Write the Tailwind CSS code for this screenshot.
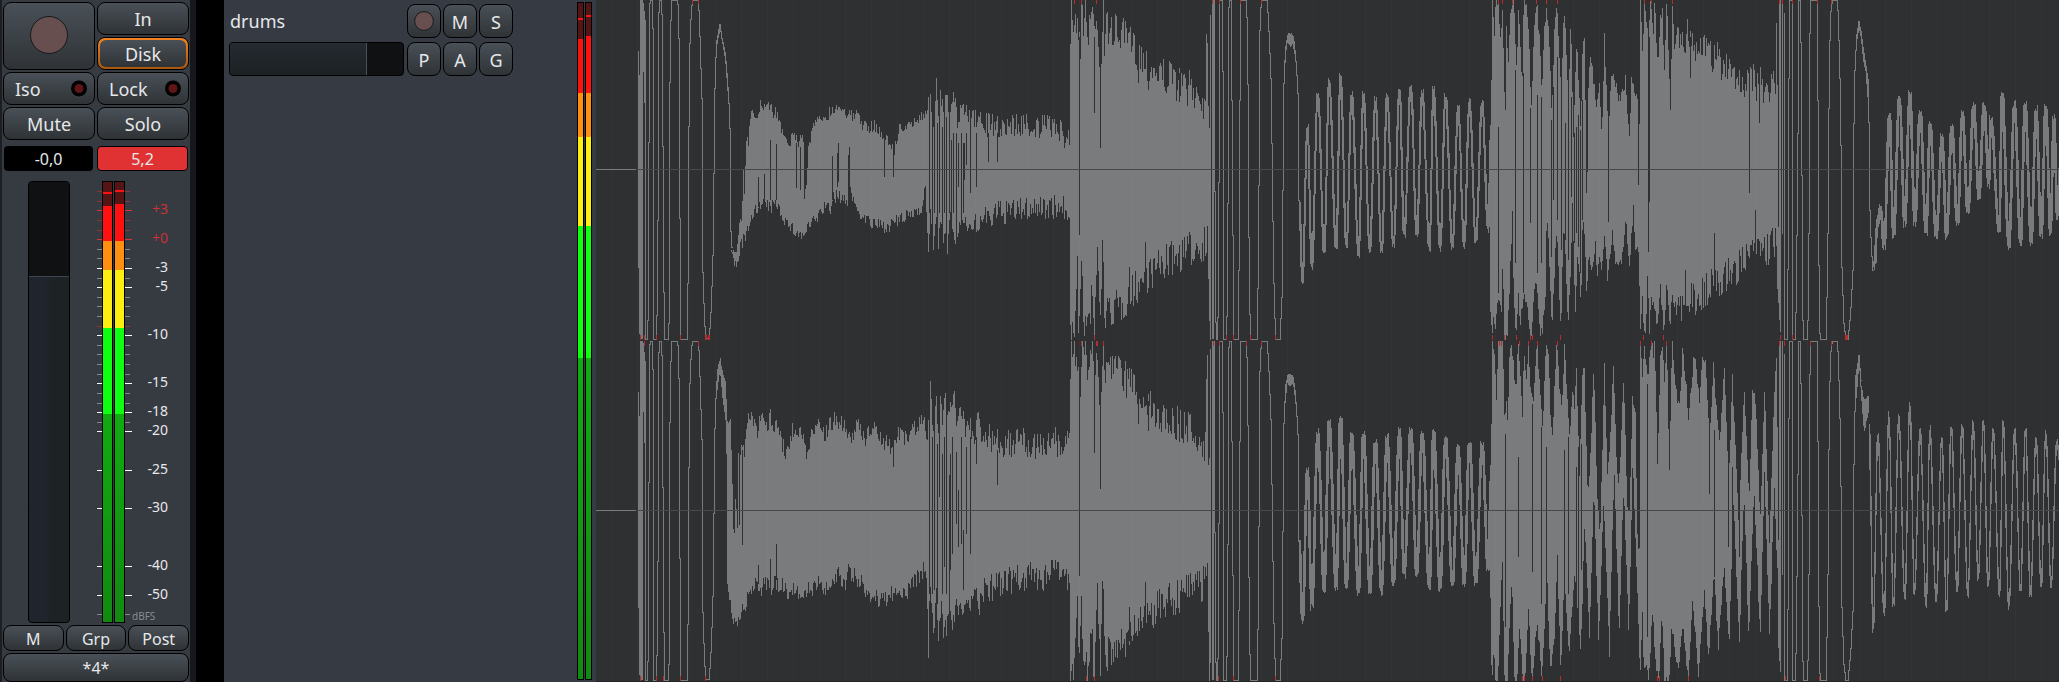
<!DOCTYPE html>
<html lang="en">
<head>
<meta charset="utf-8">
<title>drums</title>
<meta name="viewport" content="width=device-width, initial-scale=1">
<script src="https://cdn.jsdelivr.net/npm/@tailwindcss/browser@4"></script>
</head>
<body class="flex h-screen overflow-hidden bg-black font-['Noto_Sans','Open_Sans',sans-serif] text-lg text-[#e6e8ea]">

<!-- Mixer strip -->
<aside class="flex w-[196px] shrink-0 flex-col border-l-2 border-[#1c1e21] border-r-[6px] border-r-[#16181b] bg-[#363a41] pt-0.5 pr-px pl-px" aria-label="Mixer strip">
  <div class="grid grid-cols-2 gap-0.5">
    <button aria-label="Record" class="row-span-2 flex items-center justify-center rounded-lg border border-black bg-linear-to-b from-[#495057] to-[#2f3336]">
      <svg class="size-10" viewBox="0 0 40 40"><circle cx="20" cy="19" r="18.5" fill="#684f4f" stroke="#17191b"/></svg>
    </button>
    <button class="h-[33px] rounded-lg border border-black bg-linear-to-b from-[#495057] to-[#2f3336] leading-none">In</button>
    <button class="h-[33px] rounded-lg border border-black bg-linear-to-b from-[#f58220] to-[#a8560f] p-0.5 leading-none"><span class="flex h-full items-center justify-center rounded-md bg-linear-to-b from-[#495057] to-[#2f3336]">Disk</span></button>
    <button class="flex h-[33px] items-center justify-between rounded-lg border border-black bg-linear-to-b from-[#495057] to-[#2f3336] pr-[5px] pl-[11px] leading-none">Iso
      <svg class="size-5" viewBox="0 0 20 20"><circle cx="10" cy="10" r="9" fill="#3c4145"/><circle cx="10" cy="9.500" r="8" fill="#000"/><circle cx="10" cy="9.500" r="4.500" fill="#601516"/></svg></button>
    <button class="flex h-[33px] items-center justify-between rounded-lg border border-black bg-linear-to-b from-[#495057] to-[#2f3336] pr-[5px] pl-[11px] leading-none">Lock
      <svg class="size-5" viewBox="0 0 20 20"><circle cx="10" cy="10" r="9" fill="#3c4145"/><circle cx="10" cy="9.500" r="8" fill="#000"/><circle cx="10" cy="9.500" r="4.500" fill="#601516"/></svg></button>
    <button class="h-[33px] rounded-lg border border-black bg-linear-to-b from-[#495057] to-[#2f3336] leading-none">Mute</button>
    <button class="h-[33px] rounded-lg border border-black bg-linear-to-b from-[#495057] to-[#2f3336] leading-none">Solo</button>
  </div>
  <div class="mt-1.5 flex gap-1 px-px text-base">
    <button class="h-[25px] flex-1 rounded-sm bg-black pt-px leading-none">-0,0</button>
    <button class="h-[25px] flex-1 rounded-sm border border-black bg-[#e03232] pt-px leading-none">5,2</button>
  </div>
  <div class="mt-2.5 flex min-h-0 flex-1 pl-[25px]">
    <div class="relative w-[42px] overflow-hidden rounded-sm border border-black bg-linear-to-r from-[#20242c] from-40% to-[#1d2224] to-60%">
      <div class="h-[95px] border-b border-[#3d4650] bg-[#101113]"></div>
      <input type="range" aria-label="Fader" min="0" max="100" value="78" class="absolute inset-0 h-full w-full opacity-0 [writing-mode:vertical-lr]">
    </div>
    <svg class="ml-[26px] h-full w-[76px]" viewBox="96 181 76 442" role="img" aria-label="Level meter">
      <defs>
        <linearGradient id="deep" x1="0" y1="0" x2="0" y2="1"><stop offset="0" stop-color="#10ac10"/><stop offset="1" stop-color="#128912"/></linearGradient>
      </defs>
      <g shape-rendering="crispEdges">
        <path fill="#000" d="M102 181h11v442h-11zM114 181h11v442h-11z"/>
        <path fill="#551516" d="M103 182h9v30h-9zM115 182h9v30h-9z"/>
        <path fill="#ff1011" d="M103 206h9v35h-9zM115 204h9v37h-9zM103 192h9v2h-9zM115 190h9v2h-9z"/>
        <path fill="#ff8f11" d="M103 241h9v29h-9zM115 241h9v29h-9z"/>
        <path fill="#fdee11" d="M103 270h9v58h-9zM115 270h9v58h-9z"/>
        <path fill="#0fff10" d="M103 328h9v86h-9zM115 328h9v86h-9z"/>
        <path fill="url(#deep)" d="M103 414h9v208h-9zM115 414h9v208h-9z"/>
        <g id="ticks"></g>
      </g>
      <g id="marks" font-size="14" text-anchor="end" fill="#e6e8ea"></g>
      <text x="132" y="620" font-size="10" fill="#878c93">dBFS</text>
    </svg>
  </div>
  <div class="mt-0.5 flex gap-0.5 text-base">
    <button class="h-[26px] flex-1 rounded-lg border border-black bg-linear-to-b from-[#495057] to-[#2f3336] pt-px leading-none">M</button>
    <button class="h-[26px] flex-1 rounded-lg border border-black bg-linear-to-b from-[#495057] to-[#2f3336] pt-px leading-none">Grp</button>
    <button class="h-[26px] flex-1 rounded-lg border border-black bg-linear-to-b from-[#495057] to-[#2f3336] pt-px leading-none">Post</button>
  </div>
  <button class="mt-0.5 h-[29px] shrink-0 rounded-lg border border-black bg-linear-to-b from-[#495057] to-[#2f3336] text-base leading-none">*4*</button>
</aside>

<!-- Track header -->
<section class="ml-7 flex w-[372px] shrink-0 justify-between bg-[#363a42] pr-1 pl-[5px]" aria-label="Track drums">
  <div class="flex gap-[3px] pt-1">
    <div class="flex flex-col gap-1">
      <h1 class="h-[34px] pl-px leading-[34px] font-normal">drums</h1>
      <div class="relative h-[34px] w-[175px] overflow-hidden rounded-sm border border-black bg-[#101113]">
        <div class="h-full w-[79%] border-r border-[#4a525a] bg-linear-to-b from-[#252a33] to-[#1c2123]"></div>
        <input type="range" aria-label="Track gain" min="0" max="100" value="79" class="absolute inset-0 h-full w-full opacity-0">
      </div>
    </div>
    <div class="grid grid-cols-3 content-start gap-x-0.5 gap-y-1">
      <button aria-label="Record enable" class="flex size-[34px] items-center justify-center rounded-lg border border-black bg-linear-to-b from-[#495057] to-[#2f3336]"><svg class="size-5" viewBox="0 0 20 20"><circle cx="10" cy="10" r="9.400" fill="#684f4f" stroke="#17191b"/></svg></button>
      <button class="size-[34px] rounded-lg border border-black bg-linear-to-b from-[#495057] to-[#2f3336] pt-0.5 leading-none">M</button>
      <button class="size-[34px] rounded-lg border border-black bg-linear-to-b from-[#495057] to-[#2f3336] pt-0.5 leading-none">S</button>
      <button class="size-[34px] rounded-lg border border-black bg-linear-to-b from-[#495057] to-[#2f3336] pt-0.5 leading-none">P</button>
      <button class="size-[34px] rounded-lg border border-black bg-linear-to-b from-[#495057] to-[#2f3336] pt-0.5 leading-none">A</button>
      <button class="size-[34px] rounded-lg border border-black bg-linear-to-b from-[#495057] to-[#2f3336] pt-0.5 leading-none">G</button>
    </div>
  </div>
  <svg class="h-full w-[15px]" viewBox="577 0 15 682" preserveAspectRatio="none" shape-rendering="crispEdges" role="img" aria-label="Track meter">
    <path fill="#000" d="M577 2h7v678h-7zM585 2h7v678h-7z"/>
    <path fill="#551516" d="M578 3h5v36h-5zM586 3h5v36h-5z"/>
    <path fill="#ff1011" d="M578 39h5v54h-5zM586 36h5v57h-5zM578 18h5v2h-5zM586 15h5v2h-5z"/>
    <path fill="#ff8f11" d="M578 93h5v44h-5zM586 93h5v44h-5z"/>
    <path fill="#fdee11" d="M578 137h5v89h-5zM586 137h5v89h-5z"/>
    <path fill="#0fff10" d="M578 226h5v132h-5zM586 226h5v132h-5z"/>
    <path fill="url(#deep)" d="M578 358h5v321h-5zM586 358h5v321h-5z"/>
  </svg>
</section>

<!-- Audio region -->
<main class="min-w-0 flex-1 bg-[#2f3032]">
  <svg class="block h-full w-full" viewBox="596 0 1463 682" preserveAspectRatio="none" shape-rendering="crispEdges" fill="none" role="img" aria-label="Waveform of drums">
    <path id="wave" stroke="#7a7b7d"/>
    <path id="gaps" stroke="#2f3032"/>
    <path id="grid" stroke="#ffffff" stroke-opacity=".02"/>
    <path stroke="#47484a" d="M637 169.500H2059M637 510.500H2059"/>
    <path stroke="#7a7b7d" d="M596 169.500H636M596 510.500H636"/>
    <path id="clips" stroke="#b92c2e"/>
    <path stroke="#242527" d="M596 681.500H2059"/>
  </svg>
</main>

<script>
// Meter scale
const tick = (ys, color, w) => ys.map(y => `<path fill="${color}" d="M97 ${y}h5v1h-5zM125 ${y}h${w}v1h-${w}z"/>`).join('');
document.getElementById('ticks').innerHTML =
  tick([191, 201, 220, 230, 326], '#8b3538', 5) + tick([210, 239], '#e03232', 7) +
  tick([249, 258, 278, 297, 306, 316, 345, 354, 364, 374, 393, 403, 422, 614], '#85888c', 5) +
  tick([268, 287, 335, 383, 412, 431, 470, 508, 566, 595], '#ffffff', 7);
document.getElementById('marks').innerHTML =
  [['+3', 209], ['+0', 238], ['-3', 267], ['-5', 286], ['-10', 334], ['-15', 382], ['-18', 411], ['-20', 430], ['-25', 469], ['-30', 507], ['-40', 565], ['-50', 594]]
  .map(([t, y]) => `<text x="168" y="${y + 5}"${t[0] === '+' ? ' fill="#c93236"' : ''}>${t}</text>`).join('');

// Waveform. Sample positions are in thirds of a pixel, relative to each block's origin.
let wave = '', gaps = '', seed = 7;
const rnd = () => (seed = (seed * 16807) % 2147483647) / 2147483647 - 0.5;
let lane = { y: 0, lo: 0, hi: 340 };
const span = (x, a, b) => {
  a = Math.max(lane.lo, Math.round(a)); b = Math.min(lane.hi, Math.round(b));
  if (b <= a) b = a + 1;
  wave += `M${x}.5 ${a}V${b}`;
};
const at = (p, x) => {
  if (x <= p[0]) return p[1];
  for (let i = 2; i < p.length; i += 2)
    if (x <= p[i]) return p[i - 1] + (p[i + 1] - p[i - 1]) * (x - p[i - 2]) / (p[i] - p[i - 2]);
  return p[p.length - 1];
};
function fill(x0, top, bot, jitter, dark = []) {
  const s = top[0], e = top[top.length - 2];
  for (let x = Math.round(s / 3); x * 3 < e; x++) {
    const a = at(top, x * 3 + 1) + rnd() * jitter, b = at(bot, x * 3 + 1) + rnd() * jitter;
    span(x0 + x, lane.y + a / 3, lane.y + Math.max(b, a + 6) / 3);
  }
  for (const [x, a, b] of dark) gaps += `M${x0 + Math.floor(x / 3)}.5 ${Math.round(lane.y + a / 3)}V${Math.round(lane.y + b / 3)}`;
}
function line(x0, p) {
  for (let i = 2; i < p.length; i += 2) {
    const xa = p[i - 2] / 3, ya = p[i - 1] / 3, xb = p[i] / 3, yb = p[i + 1] / 3;
    for (let c = Math.floor(xa); c <= Math.floor(xb); c++) {
      const f = x => xb === xa ? null : ya + (yb - ya) * (Math.min(Math.max(x, xa), xb) - xa) / (xb - xa);
      const u = f(c) ?? ya, v = f(c + 1) ?? yb;
      span(x0 + c, lane.y + Math.min(u, v), lane.y + Math.max(u, v) + 1);
    }
  }
}
function swing(x0, p, w) {
  const f = x => {
    for (let i = 2; i < p.length; i += 2)
      if (x <= p[i]) {
        const t = Math.max(0, (x - p[i - 2]) / (p[i] - p[i - 2]));
        return p[i - 1] + (p[i + 1] - p[i - 1]) * (1 - Math.cos(Math.PI * t)) / 2;
      }
    return p[p.length - 1];
  };
  for (let x = Math.round(p[0] / 3); x * 3 < p[p.length - 2]; x++) {
    const v = [-w, -w / 2, 0, w / 2, w].map(d => f(x * 3 + 1 + d));
    span(x0 + x, lane.y + (Math.min(...v) - 4 + rnd() * 18) / 3, lane.y + (Math.max(...v) + 4 + rnd() * 18) / 3);
  }
}

const kickA = [256,115,258,1018,261,1018,264,960,267,425,270,10,272,0,277,0,279,85,281,1018,289,1018,293,870,297,35,299,0,304,0,307,65,310,625,313,1000,315,1018,324,1018,327,970,330,245,334,0,352,0,355,20,358,160,361,900,362,1018,382,1018,385,765,388,185,392,70,397,0,414,0,418,40,422,175,427,325,429,815,433,940,437,1015,448,1015,454,920,460,735,464,300,467,190,471,120];
const kickB = [763,0,766,860,769,1018,773,1018,776,820,779,0,787,0,790,320,791,1018,798,1018,803,900,806,30,809,0,814,0,818,600,822,1018,836,1018,838,600,842,0,859,0,863,100,867,710,871,1018,892,1018,896,710,900,90,904,0,922,0,928,110,934,260,938,600,943,910,948,1018,960,1018,967,870,971,270,975,180];
const kickC = [253,40,254,1018,262,1018,265,700,268,0,277,0,278,1018,285,1018,289,910,294,400,297,0,302,0,305,380,309,960,312,1018,322,1018,326,900,330,100,332,0,352,0,354,300,358,960,361,1018,379,1018,384,700,388,200,392,40,397,0,413,0,418,150,422,315,426,800,432,970,438,1018,444,1018,452,940,459,810,462,370,465,210,470,110];
const snareTop = [330,130,334,0,341,90,344,0,347,125,350,15,358,110,362,150,365,0,370,60,376,0,382,120,390,40,398,30,404,110,410,0,418,200,424,170,430,0,434,180,440,70,452,90,480,100,510,130,540,165,570,200,600,220,630,235,660,255,690,265,720,285,736,320,738,80,742,80,744,350,749,350,750,0,753,0];
const snareBot = [330,1000,338,1018,345,960,352,760,356,1018,365,780,370,960,385,990,395,880,403,1010,412,740,422,980,428,720,434,950,450,930,480,920,505,890,530,860,560,825,590,805,620,785,650,770,680,755,710,740,738,725,740,740,743,600,746,1000,752,1018];
const snareGaps = [[358,110,705],[421,200,445],[404,110,338],[412,740,900],[428,720,900],[509,800,900],[556,725,850],[565,180,270],[535,150,250],[658,220,305]];
const tailB = [1017,600,1027,840,1042,385,1055,800,1073,275,1092,755,1107,245,1128,745,1141,230,1159,740,1175,280,1195,760,1210,280,1229,750,1246,300,1264,755,1281,290,1300,735,1318,268,1332,705,1352,262,1370,705,1386,278,1408,745,1420,270,1440,745,1456,290,1477,740,1494,320,1512,735,1528,305,1547,725,1566,310,1584,690,1592,420];

function hits() {
  line(560, [234,153,235,800]);
  line(560, [237,225,238,1000]);
  fill(560, [240,0,249,0], [240,1018,249,1018], 0);
  fill(560, [249,0,256,60], [249,185,256,400], 0);
  line(560, kickA);
  fill(960, snareTop, snareBot, 110, snareGaps);
  fill(960, [756,0,762,0], [756,1018,762,1018], 0);
  line(960, kickB);
  fill(960, [975,140,981,104,990,98,999,104,1005,140,1010,190], [975,200,981,130,990,138,999,135,1005,180,1010,230], 8);
  line(960, [1007,170,1012,240,1015,300,1017,600]);
  line(1700, [229,70,232,400,235,820,238,950]);
  fill(1700, [237,0,243,0], [237,950,243,1018], 0);
  line(1700, [247,0,248,700]);
  line(1700, kickC);
}

// Left channel
hits();
line(560, [471,120,480,72,487,120,496,160,501,230,507,310,511,410,511,660,516,740]);
fill(560, [471,120,480,76,486,105,496,155,503,230,508,310], [471,140,480,90,486,125,496,185,503,275,508,340], 6);
fill(560,
  [513,735,522,745,528,745,531,730,540,640,546,660,550,490,553,600,558,400,565,440,570,360,580,340,590,350,603,310,610,330,625,325,631,305,640,335,655,350,662,380,675,400,690,430,703,395,715,440,722,400,730,420,733,580,738,570,745,450,755,390,770,370,790,350,810,335,838,315,860,335,880,355,895,340,910,380,930,390,942,370,960,400,980,420,1000,450,1010,430,1022,370,1040,390,1070,360,1100,330,1108,300],
  [513,750,525,800,530,800,540,740,555,710,570,680,585,620,600,620,615,610,630,625,650,610,665,640,680,670,700,690,728,710,745,680,770,655,800,610,808,640,820,590,840,590,860,610,870,560,885,620,910,650,940,675,980,680,1020,660,1050,645,1085,620,1096,560,1100,650,1105,765,1108,700], 40,
  [[631,420,600],[650,433,600],[595,530,620],[613,523,600],[710,430,565],[722,440,570],[818,468,600],[832,460,560],[836,428,545],[865,465,600],[868,440,580],[973,420,530],[1000,450,530]]);
fill(560,
  [1108,300,1111,255,1117,360,1125,350,1128,235,1134,370,1141,275,1149,340,1156,290,1170,325,1183,300,1192,370,1200,330,1225,340,1238,390,1250,350,1260,360],
  [1108,700,1112,640,1120,725,1128,640,1135,758,1143,640,1150,720,1162,735,1170,640,1178,715,1200,690,1215,640,1233,695,1245,650,1260,690], 60,
  [[1108,250,640],[1117,360,800],[1124,200,640],[1131,370,800],[1138,200,640],[1146,380,800],[1153,200,640],[1160,350,800],[1168,200,640],[1175,420,800],[1181,400,640],[1190,400,680],[1196,430,560],[1205,420,690],[1214,430,540],[1230,350,580],[1248,400,560]]);
fill(960,
  [0,370,30,365,60,370,106,380,150,375,205,375,240,385,283,375,300,395,310,410,330,400],
  [0,670,30,665,58,660,85,655,112,640,157,635,200,625,250,620,305,620,330,640], 76,
  [[10,430,640],[31,400,580],[20,400,495],[112,400,485],[85,400,485],[49,400,480],[4,400,478]]);
swing(960, tailB, 3);
fill(1360,
  [390,420,393,330,397,0,404,115,407,0,414,0,422,115,428,0,432,265,436,335,440,0,443,225,450,60,455,0,461,0,470,230,475,20,486,270,491,0,497,0,505,80,514,325,523,60,530,0,540,150,545,290,553,80,560,20,570,165,575,360,583,90,591,0,598,170,604,300,610,55,615,60,625,310,632,60,640,400,650,110,662,390,668,130,673,125,680,570,685,250,691,160,710,320,718,235,725,420,733,115,745,400,752,250,760,215,780,310,797,235,807,425,815,220,820,265,835,310,838,370,841,0,848,185,852,0,865,110,872,0,880,90,884,0,893,210,900,60,908,20,912,240,920,0,932,370,936,0,944,160,950,80],
  [390,900,393,975,398,1018,401,910,405,1018,412,900,417,880,425,940,428,740,432,1018,442,1018,452,770,457,640,461,900,468,1018,475,880,480,980,490,890,500,900,512,1018,527,820,540,1000,547,1000,556,880,560,640,566,740,575,990,590,670,602,1000,610,690,615,720,624,990,632,800,637,600,645,950,653,740,663,920,668,620,673,700,680,890,686,750,697,815,706,710,710,840,718,770,725,810,733,710,743,845,757,700,765,785,785,780,797,650,808,800,820,620,825,740,835,760,842,1018,846,850,851,1018,858,970,863,780,867,1018,872,890,885,940,890,990,901,850,911,1010,920,850,930,980,936,880,950,940], 34,
  [[415,380,880],[467,210,790],[490,220,880],[511,325,670],[532,285,820],[544,290,790],[575,360,770],[580,260,600],[592,170,660],[605,300,750],[616,370,720],[625,310,780],[634,290,590],[643,400,730],[649,380,700],[655,345,740],[661,390,820],[667,300,660],[679,330,578],[682,330,515],[745,370,665],[835,320,555],[865,110,755],[868,110,605]]);
fill(1360,
  [950,90,980,110,1010,130,1040,150,1070,180,1100,205,1130,230,1160,240,1190,250,1220,265,1240,260,1246,230,1250,70,1254,380],
  [950,930,980,905,1010,895,1040,870,1070,850,1100,830,1130,800,1160,780,1190,765,1220,750,1245,720,1250,800,1255,950], 112,
  [[992,110,235],[1168,200,580],[1063,700,900],[1187,630,800],[1198,230,370],[977,810,950]]);
line(1700, [470,110,477,62,485,120,491,180,498,210,505,300,508,400,510,630,514,740,519,810]);
fill(1700, [470,100,477,62,485,100,491,150,498,190,505,240], [470,130,477,90,485,130,491,190,498,225,505,320], 6);
swing(1700, [519,800,524,795,530,680,541,620,552,740,568,340,580,710,598,295,614,670,629,280,644,670,660,335,678,700,690,375,708,710,726,410,739,715,755,380,772,670,787,340,803,640,821,315,836,595,852,315,866,555,872,355,897,690,906,280,926,740,943,310,961,730,975,310,993,730,1008,325,1023,705,1037,320,1051,700,1061,345,1072,655,1080,500], 4);

// Right channel
lane = { y: 340.5, lo: 341, hi: 681 };
hits();
swing(960, tailB, 4);
lane.y = 337;
fill(560, [471,105,480,58,486,100,496,135,501,225], [471,165,480,105,486,175,496,245,501,420], 8);
fill(560,
  [501,235,510,240,516,400,522,640,527,420,531,660,535,375,538,570,542,300,547,330,555,340,563,240,577,240,590,290,604,235,618,280,631,235,645,275,655,255,665,320,680,350,692,290,705,275,715,310,722,275,740,365,755,275,781,255,795,300,810,262,828,243,850,265,868,310,895,250,915,310,942,265,970,310,1000,340,1015,285,1040,305,1070,265,1093,250,1102,300,1108,240],
  [501,730,510,800,520,850,530,870,540,830,560,790,580,740,600,770,615,740,630,760,645,735,665,745,690,775,705,740,728,790,745,760,752,780,765,735,785,745,806,765,818,725,835,710,855,750,865,700,885,715,905,740,930,775,950,785,980,785,1010,755,1042,770,1060,735,1080,710,1098,690,1105,945,1108,800], 52,
  [[547,340,625],[631,665,740],[650,620,730],[595,685,740],[1000,330,390]]);
fill(560,
  [1108,240,1112,120,1118,280,1125,270,1128,112,1133,310,1141,170,1148,260,1154,170,1165,230,1183,185,1190,300,1198,215,1210,230,1220,330,1228,255,1245,320,1253,245,1260,270],
  [1108,800,1112,770,1121,880,1128,760,1135,910,1143,800,1150,880,1162,865,1170,790,1178,865,1190,800,1205,820,1215,780,1222,740,1232,815,1245,750,1260,815], 60,
  [[1108,200,770],[1117,300,770],[1124,130,760],[1131,320,800],[1138,150,480],[1146,350,770],[1153,300,690],[1160,150,770],[1168,415,900],[1172,350,700],[1178,300,650],[1190,345,560],[1196,460,630],[1205,300,620],[1220,330,590],[1230,300,650],[1250,300,380]]);
fill(960,
  [0,280,30,290,60,300,106,310,150,315,205,320,245,320,283,310,310,350,320,320,330,335],
  [0,780,30,765,58,755,90,750,112,745,157,730,205,720,260,715,305,710,330,735], 92,
  [[4,350,620],[10,580,760],[19,340,590],[31,300,650],[112,340,445]]);
fill(1360,
  [390,400,393,320,397,10,403,35,409,210,414,10,428,10,434,290,440,150,443,290,448,60,455,10,462,100,468,170,474,10,480,90,488,260,491,20,499,125,505,10,512,170,520,200,531,10,540,180,548,270,558,10,566,60,570,220,577,290,590,15,600,170,606,200,613,40,622,180,630,300,638,155,643,230,649,100,658,400,667,120,673,85,683,500,692,350,701,80,712,500,720,600,733,95,742,420,750,300,760,100,773,450,780,400,790,125,802,500,809,520,817,165,826,230,832,600,838,650,841,10,848,120,852,10,863,120,872,10,880,50,884,10,893,380,901,60,908,10,912,150,920,20,928,400,936,10,945,120,957,230,968,30,985,230,1003,50,1018,200,1025,80,1036,70,1048,300,1060,90,1078,310,1093,100,1106,460,1117,120,1136,560,1152,140,1167,500,1177,150,1187,190,1200,560,1214,150,1228,620,1243,160,1250,45,1255,600],
  [390,700,393,980,397,1020,401,915,407,1030,413,1030,422,790,428,640,432,1030,443,1030,452,750,457,780,463,1030,470,1030,478,870,488,1020,495,1030,504,810,516,1025,531,850,546,1020,560,700,572,1030,583,900,592,660,602,1025,613,700,626,965,638,780,645,700,662,950,674,560,688,915,701,460,716,925,731,480,748,940,762,400,777,885,791,440,806,895,818,360,838,950,842,1020,846,770,851,1030,857,960,866,1030,878,810,888,1018,897,1020,905,810,913,1015,928,1020,935,870,945,950,957,990,968,860,985,1025,998,780,1015,1015,1033,760,1044,970,1062,720,1075,935,1092,680,1107,920,1120,500,1138,910,1152,460,1166,930,1182,440,1200,910,1213,400,1228,895,1243,460,1252,700,1256,1000], 40,
  [[436,290,870],[475,360,660],[517,200,705],[544,270,800],[560,330,710],[612,340,710],[625,300,770],[649,390,800],[655,330,850],[664,320,700],[863,140,900],[893,200,380],[928,200,400],[1063,280,720],[1105,380,630],[1048,240,470],[1117,390,600],[1138,360,660]]);
line(1700, [470,110,477,55,483,130]);
fill(1700, [465,120,477,55,483,140,492,190,500,180,505,175,508,260], [465,230,477,90,483,180,492,290,500,250,505,225,508,400], 6);
swing(1700, [507,260,519,880,533,300,552,830,566,235,580,805,596,240,614,785,629,205,643,765,660,282,678,805,689,275,708,790,725,300,739,820,753,268,771,760,786,262,803,775,819,257,834,720,850,260,864,750,879,278,898,770,909,260,926,810,944,280,961,765,976,280,991,775,1008,302,1023,750,1037,292,1053,750,1070,315,1080,380], 2);

document.getElementById('wave').setAttribute('d', wave);
document.getElementById('gaps').setAttribute('d', gaps);

let grid = '';
for (let x = 611; x < 2059; x += 26) grid += `M${x}.5 0V681`;
document.getElementById('grid').setAttribute('d', grid);

// Clipped samples at the edges of each channel
const clips = [
  [0, 4, [692, 698, 1074, 1081, 1096, 1212, 1219, 1240, 1261, 1498, 1502, 1512, 1536, 1546, 1557, 1644, 1651, 1672, 1779, 1782, 1792, 1817, 1831]],
  [335, 340, [640, 644, 656, 680, 705, 706, 708, 709, 1094, 1226, 1233, 1250, 1275, 1492, 1504, 1516, 1530, 1532, 1560, 1643, 1663, 1780, 1792, 1845, 1846, 1847]],
  [341, 346, [644, 698, 1081, 1096, 1097, 1103, 1213, 1219, 1246, 1261, 1499, 1501, 1519, 1528, 1537, 1557, 1640, 1651, 1666, 1779, 1784, 1810, 1831]],
  [676, 681, [640, 656, 663, 680, 705, 1086, 1094, 1218, 1233, 1275, 1522, 1524, 1532, 1542, 1560, 1657, 1659, 1688, 1785, 1819]]
];
document.getElementById('clips').setAttribute('d', clips.map(([a, b, xs]) => xs.map(x => `M${x}.5 ${a}V${b}`).join('')).join(''));
</script>
</body>
</html>
